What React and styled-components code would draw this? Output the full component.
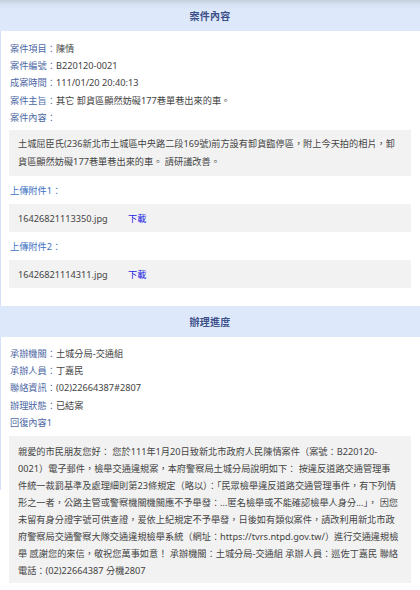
import React from "react";
import styled, { createGlobalStyle } from "styled-components";

const GlobalStyle = createGlobalStyle`
  body {
    margin: 0;
    /* thin blue rule down the left edge of the frame */
    background: linear-gradient(#d3e2f8, #d3e2f8) left top / 1px 490px no-repeat, #fff;
    font-family: "Noto Sans", "Noto Sans CJK TC", sans-serif;
    color: #444;
  }
`;

const caseFields = [
  { label: "案件項目", value: "陳情" },
  { label: "案件編號", value: "B220120-0021" },
  { label: "成案時間", value: "111/01/20 20:40:13" },
  { label: "案件主旨", value: "其它 卸貨區顯然妨礙177巷單巷出來的車。" },
  { label: "案件內容", value: "" },
];

const progressFields = [
  { label: "承辦機關", value: "土城分局-交通組" },
  { label: "承辦人員", value: "丁嘉民" },
  { label: "聯絡資訊", value: "(02)22664387#2807" },
  { label: "辦理狀態", value: "已結案" },
];

const attachments = [
  { title: "上傳附件1：", file: "16426821113350.jpg" },
  { title: "上傳附件2：", file: "16426821114311.jpg" },
];

const reply =
  "親愛的市民朋友您好： 您於111年1月20日致新北市政府人民陳情案件（案號：B220120-0021）電子郵件，檢舉交通違規案，本府警察局土城分局說明如下： 按違反道路交通管理事件統一裁罰基準及處理細則第23條規定（略以）：「民眾檢舉違反道路交通管理事件，有下列情形之一者，公路主管或警察機關機關應不予舉發：...匿名檢舉或不能確認檢舉人身分...」， 因您未留有身分證字號可供查證，爰依上紀規定不予舉發，日後如有類似案件，請改利用新北市政府警察局交通警察大隊交通違規檢舉系統（網址：https://tvrs.ntpd.gov.tw/）進行交通違規檢舉 感謝您的來信，敬祝您萬事如意！ 承辦機關：土城分局-交通組 承辦人員：巡佐丁嘉民 聯絡電話：(02)22664387 分機2807";

export default function App() {
  return (
    <>
      <GlobalStyle />
      <Frame>
        <SectionHeader $top>案件內容</SectionHeader>
        <SectionBody>
          {caseFields.map((f) => (
            <Field key={f.label}>
              <Label>{f.label}：</Label>
              <Value>{f.value}</Value>
            </Field>
          ))}
          <TextBox>
            土城屈臣氏(236新北市土城區中央路二段169號)前方設有卸貨臨停區，附上今天拍的相片，卸貨區顯然妨礙177巷單巷出來的車。 請研議改善。
          </TextBox>
          {attachments.map((a) => (
            <React.Fragment key={a.file}>
              <AttachTitle>{a.title}</AttachTitle>
              <FileRow>
                <FileName>{a.file}</FileName>
                <Download href="#">下載</Download>
              </FileRow>
            </React.Fragment>
          ))}
        </SectionBody>

        <SectionHeader>辦理進度</SectionHeader>
        <SectionBody $top={8}>
          {progressFields.map((f) => (
            <Field key={f.label}>
              <Label>{f.label}：</Label>
              <Value>{f.value}</Value>
            </Field>
          ))}
          <Field>
            <Label>回復內容1</Label>
          </Field>
          <TextBox $reply>{reply}</TextBox>
        </SectionBody>
      </Frame>
    </>
  );
}

const Frame = styled.div`
  padding-left: 1px;
`;

const SectionHeader = styled.div`
  height: 31px;
  display: flex;
  align-items: center;
  justify-content: center;
  margin-left: -1px;
  background: ${(p) =>
    p.$top
      ? "linear-gradient(to bottom, #c6cfdd 0px, #d8e3f5 5px, #dde9fb 10px, #dde9fb 100%)"
      : "#dde9fb"};
  color: #3b4f89;
  font-size: 10px;
  font-weight: bold;
  letter-spacing: 0.2px;
`;

const SectionBody = styled.div`
  padding: ${(p) => p.$top || 9}px 9px 12px 8px;
`;

const Field = styled.div`
  display: flex;
  font-size: 9.2px;
  line-height: 17.2px;
  padding-left: 1px;
`;

const Label = styled.span`
  color: #4c67a3;
  white-space: nowrap;
`;

const Value = styled.span`
  color: #444;
`;

const TextBox = styled.div`
  margin-top: ${(p) => (p.$reply ? 5 : 4)}px;
  background: #f2f2f2;
  padding: ${(p) => (p.$reply ? "7px 12px 4px 9px" : "5px 13px 6px 9px")};
  font-size: 9.2px;
  line-height: ${(p) => (p.$reply ? 17 : 17.5)}px;
  color: #444;
`;

const AttachTitle = styled.div`
  margin-top: 6px;
  font-size: 9.2px;
  line-height: 17px;
  color: #3d72c2;
  padding-left: 1px;
`;

const FileRow = styled.div`
  margin-top: 5px;
  margin-bottom: 6px;
  height: 28px;
  display: flex;
  align-items: center;
  gap: 20px;
  background: #f2f2f2;
  padding-left: 9px;
  font-size: 9.2px;
`;

const FileName = styled.span`
  color: #444;
  width: 90px;
`;

const Download = styled.a`
  color: #1a1ae6;
  text-decoration: none;
`;
